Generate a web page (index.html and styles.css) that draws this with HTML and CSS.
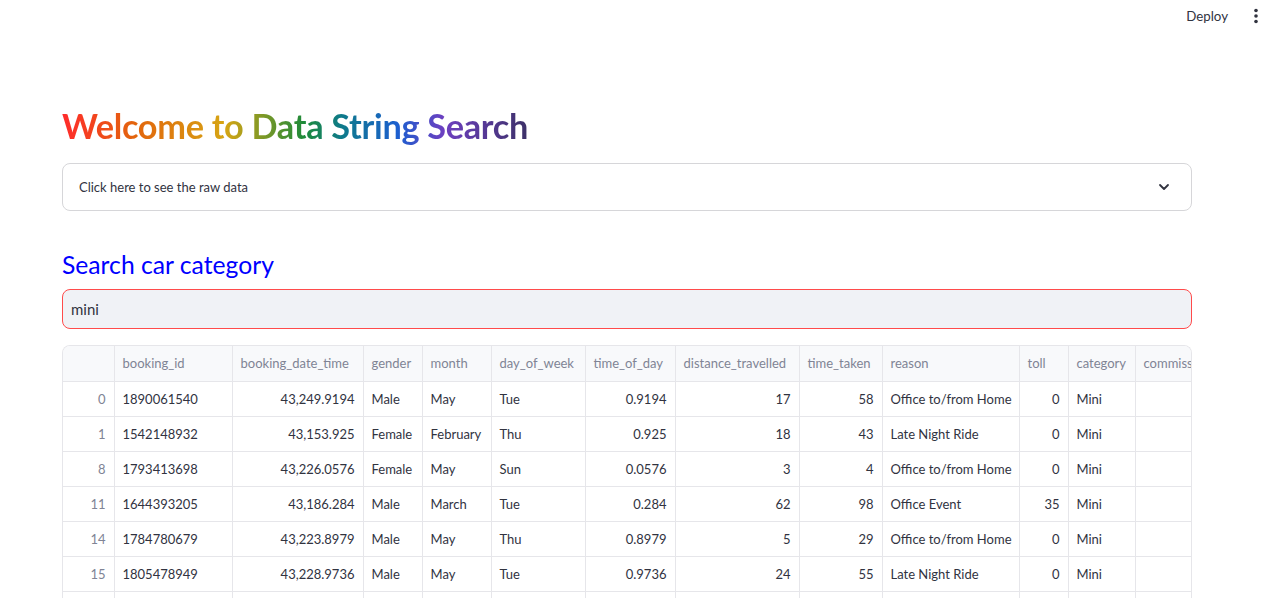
FILE: index.html
```html
<!DOCTYPE html>
<html lang="en">
<head>
<meta charset="utf-8">
<title>Data String Search</title>
<link rel="stylesheet" href="styles.css">
</head>
<body>
<header class="topbar">
  <span class="deploy">Deploy</span>
  <span class="menu" aria-label="menu">
    <svg width="6" height="16" viewBox="0 0 6 16"><circle cx="3" cy="2.5" r="1.8" fill="#31333f"/><circle cx="3" cy="8" r="1.8" fill="#31333f"/><circle cx="3" cy="13.5" r="1.8" fill="#31333f"/></svg>
  </span>
</header>
<main class="main">
  <h1 class="title"><span class="rainbow">Welcome to Data String Search</span></h1>
  <div class="expander">
    <span class="exp-label">Click here to see the raw data</span>
    <svg class="chev" width="12" height="8" viewBox="0 0 12 8"><path d="M2 2 L6 6 L10 2" fill="none" stroke="#31333f" stroke-width="1.8" stroke-linecap="round" stroke-linejoin="round"/></svg>
  </div>
  <h3 class="subhead">Search car category</h3>
  <div class="input"><span>mini</span></div>
  <div class="grid">
    <table>
      <colgroup>
        <col style="width:51px"><col style="width:118px"><col style="width:131px"><col style="width:59px"><col style="width:69px"><col style="width:94px"><col style="width:90px"><col style="width:124px"><col style="width:83px"><col style="width:137px"><col style="width:49px"><col style="width:67px"><col style="width:100px">
      </colgroup>
      <thead>
        <tr><th></th><th>booking_id</th><th>booking_date_time</th><th>gender</th><th>month</th><th>day_of_week</th><th>time_of_day</th><th>distance_travelled</th><th>time_taken</th><th>reason</th><th>toll</th><th>category</th><th>commission</th></tr>
      </thead>
      <tbody>
        <tr><td class="idx">0</td><td>1890061540</td><td class="num">43,249.9194</td><td>Male</td><td>May</td><td>Tue</td><td class="num">0.9194</td><td class="num">17</td><td class="num">58</td><td>Office to/from Home</td><td class="num">0</td><td>Mini</td><td></td></tr>
        <tr><td class="idx">1</td><td>1542148932</td><td class="num">43,153.925</td><td>Female</td><td>February</td><td>Thu</td><td class="num">0.925</td><td class="num">18</td><td class="num">43</td><td>Late Night Ride</td><td class="num">0</td><td>Mini</td><td></td></tr>
        <tr><td class="idx">8</td><td>1793413698</td><td class="num">43,226.0576</td><td>Female</td><td>May</td><td>Sun</td><td class="num">0.0576</td><td class="num">3</td><td class="num">4</td><td>Office to/from Home</td><td class="num">0</td><td>Mini</td><td></td></tr>
        <tr><td class="idx">11</td><td>1644393205</td><td class="num">43,186.284</td><td>Male</td><td>March</td><td>Tue</td><td class="num">0.284</td><td class="num">62</td><td class="num">98</td><td>Office Event</td><td class="num">35</td><td>Mini</td><td></td></tr>
        <tr><td class="idx">14</td><td>1784780679</td><td class="num">43,223.8979</td><td>Male</td><td>May</td><td>Thu</td><td class="num">0.8979</td><td class="num">5</td><td class="num">29</td><td>Office to/from Home</td><td class="num">0</td><td>Mini</td><td></td></tr>
        <tr><td class="idx">15</td><td>1805478949</td><td class="num">43,228.9736</td><td>Male</td><td>May</td><td>Tue</td><td class="num">0.9736</td><td class="num">24</td><td class="num">55</td><td>Late Night Ride</td><td class="num">0</td><td>Mini</td><td></td></tr>
        <tr><td class="idx">17</td><td>1712904655</td><td class="num">43,198.4521</td><td>Female</td><td>April</td><td>Mon</td><td class="num">0.4521</td><td class="num">11</td><td class="num">27</td><td>Office Event</td><td class="num">0</td><td>Mini</td><td></td></tr>
      </tbody>
    </table>
  </div>
</main>
</body>
</html>
```
FILE: styles.css
```css
* { box-sizing: border-box; }
html, body { margin: 0; padding: 0; background: #ffffff; }
body {
  font-family: "Source Sans Pro", Lato, "Liberation Sans", sans-serif;
  color: #31333f;
  overflow: hidden;
}
.topbar {
  position: fixed;
  top: 0; left: 0; right: 0;
  height: 32px;
  display: flex;
  align-items: center;
  justify-content: flex-end;
  gap: 25px;
  padding-right: 12px;
  background: #ffffff;
  z-index: 10;
}
.deploy { font-size: 13.3px; color: #31333f; }
.menu { display: flex; align-items: center; }
.main {
  width: 1130px;
  margin-left: 62px;
  padding-top: 101px;
  display: flex;
  flex-direction: column;
}
.title {
  margin: 0;
  font-size: 34.3px;
  font-weight: 700;
  line-height: 50px;
  letter-spacing: -0.3px;
}
.rainbow {
  background: linear-gradient(to right, #ff2b2b 0%, #e2660c 16%, #d6a514 35%, #1d8a3a 52%, #0e7a8a 60%, #1c5fcf 72%, #6d3fc0 82%, #3d3168 100%);
  -webkit-background-clip: text;
  background-clip: text;
  color: transparent;
}
.expander {
  margin-top: 12px;
  height: 48px;
  border: 1px solid #d6d6d9;
  border-radius: 8px;
  display: flex;
  align-items: center;
  justify-content: space-between;
  padding: 0 21px 0 16px;
}
.exp-label { font-size: 13px; }
.subhead {
  margin: 38px 0 0 0;
  font-size: 24.7px;
  font-weight: 400;
  color: #0000ff;
  line-height: 32px;
}
.input {
  margin-top: 8px;
  height: 40px;
  background: #f0f2f6;
  border: 1px solid #ff4b4b;
  border-radius: 8px;
  display: flex;
  align-items: center;
  padding-left: 8px;
  font-size: 15px;
}
.grid {
  margin-top: 16px;
  border: 1px solid #e6e6ea;
  border-bottom: none;
  border-radius: 8px 8px 0 0;
  overflow: hidden;
}
table {
  border-collapse: collapse;
  table-layout: fixed;
  width: 1172px;
  font-size: 13px;
}
th, td {
  height: 35px;
  padding: 0 8px;
  border-right: 1px solid #e6e6ea;
  border-bottom: 1px solid #e6e6ea;
  white-space: nowrap;
  overflow: hidden;
  text-align: left;
  font-weight: 400;
}
thead th {
  height: 35px;
  background: #f8f9fb;
  color: #808495;
}
td.num { text-align: right; }
td.idx { text-align: right; color: #808495; }
```
